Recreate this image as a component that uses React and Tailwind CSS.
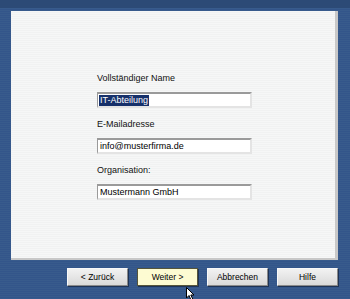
import React from "react";

const font = { fontFamily: '"Liberation Sans", Tahoma, Arial, sans-serif' };

function Field({ label, value, selected }) {
  return (
    <>
      <div className="h-[12px] leading-[12px] text-[9px] text-[#111]">{label}</div>
      <div className="h-[8px]" />
      <div className="h-[16px] w-[155px] bg-white border-t-2 border-l border-t-[#9a9a9a] border-l-[#9a9a9a] border-r-2 border-b-2 border-r-[#e4e4e4] border-b-[#e4e4e4] flex items-center pl-[1px] text-[9px] text-[#000]">
        {selected ? (
          <span className="bg-[#16306a] text-white leading-[11px] px-[1px]">{value}</span>
        ) : (
          <span className="leading-[11px] px-[1px]">{value}</span>
        )}
      </div>
    </>
  );
}

function Btn({ children, primary }) {
  return (
    <div
      className={
        primary
          ? "w-[61px] h-[18px] flex items-center justify-center text-[8.5px] text-[#000] bg-[#fdfbd2] border border-[#55553a] shadow-[1px_1px_0_#1e3355]"
          : "w-[61px] h-[18px] flex items-center justify-center text-[8.5px] text-[#000] bg-[linear-gradient(#f2f2f2,#d9d9d9)] border border-t-[#f8f8f8] border-l-[#f8f8f8] border-r-[#8a8a8a] border-b-[#8a8a8a] shadow-[1px_1px_0_#1e3355]"
      }
    >
      {children}
    </div>
  );
}

export default function App() {
  return (
    <div
      style={font}
      className="relative w-[350px] h-[299px] overflow-hidden bg-[#37598a] bg-[repeating-linear-gradient(#385b8c_0px,#385b8c_1px,#33558a_1px,#33558a_2px)]"
    >
      <div className="h-[8px] bg-[#2c4a76]" />
      <div className="pt-[3px] pl-[11px]">
        <div className="w-[327px] h-[249px] bg-[#f4f5f5] bg-[repeating-linear-gradient(#f6f7f7_0px,#f6f7f7_1px,#f1f2f2_1px,#f1f2f2_2px)] border-r-[3px] border-b-[2px] border-r-[#c8c8c8] border-b-[#c8c8c8] pl-[86px] pt-[61px] flex flex-col">
          <Field label="Vollständiger Name" value="IT-Abteilung" selected />
          <div className="h-[10px]" />
          <Field label="E-Mailadresse" value="info@musterfirma.de" />
          <div className="h-[10px]" />
          <Field label="Organisation:" value="Mustermann GmbH" />
        </div>
      </div>
      <div className="pl-[67px] pt-[8px] flex gap-[9px]">
        <Btn>&lt; Zurück</Btn>
        <Btn primary>Weiter &gt;</Btn>
        <Btn>Abbrechen</Btn>
        <Btn>Hilfe</Btn>
      </div>
      <svg className="absolute left-[186px] top-[287px]" width="12" height="14" viewBox="0 0 12 14">
        <path d="M0.5 0.5 L0.5 11 L3 8.5 L5 13 L6.8 12.2 L4.8 8 L8 8 Z" fill="#fff" stroke="#000" strokeWidth="1" />
      </svg>
    </div>
  );
}
